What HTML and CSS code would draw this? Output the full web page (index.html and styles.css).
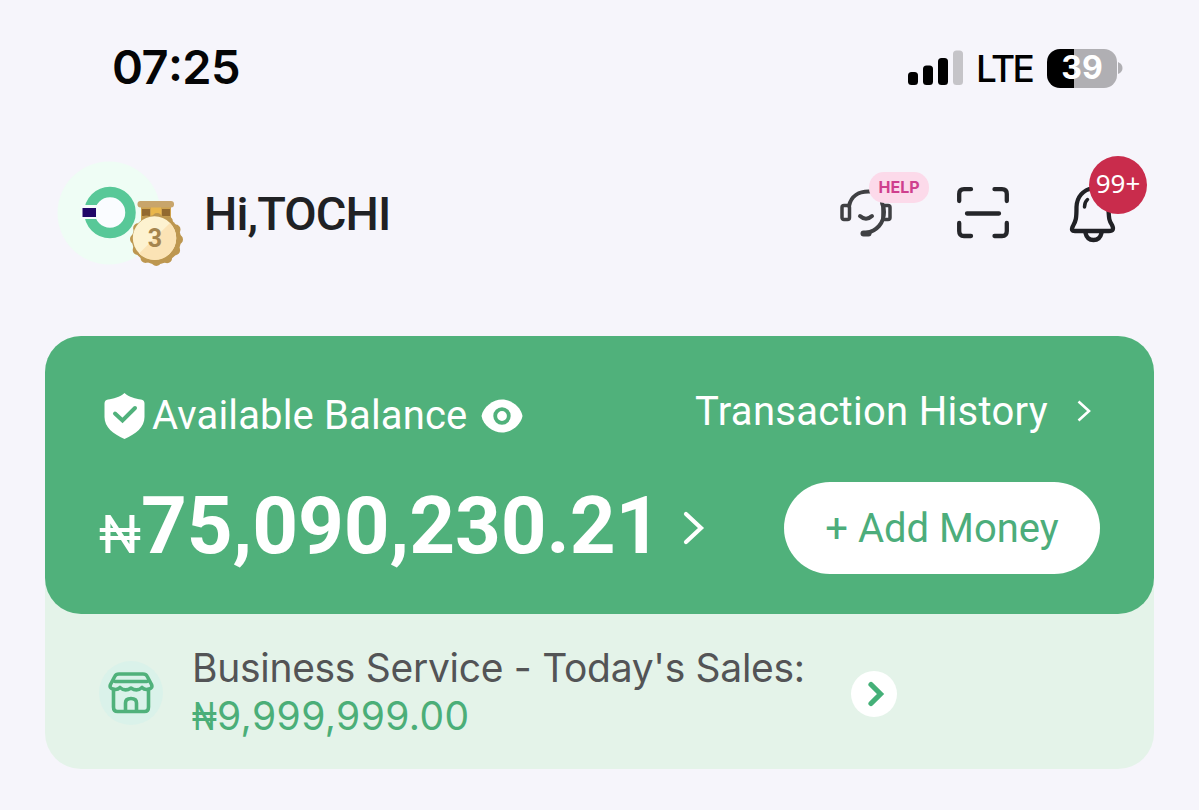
FILE: index.html
```html
<!DOCTYPE html>
<html lang="en">
<head>
    <meta charset="UTF-8">
    <meta name="viewport" content="width=device-width, initial-scale=1.0">
    <title>Wallet</title>
    <link rel="stylesheet" href="styles.css">
</head>
<body>
    <div class="status-bar">
        <span class="time">07<span class="colon">:</span>25</span>
        <svg class="signal" width="55" height="36" viewBox="0 0 55 36">
            <rect x="0" y="22" width="10" height="13" rx="3.5"/>
            <rect x="15" y="15.500" width="10" height="19.500" rx="3.500"/>
            <rect x="30" y="8" width="10" height="27" rx="3.500"/>
            <rect x="45" y="0.500" width="10" height="34.500" rx="3.500" fill="#c5c4c8"/>
        </svg>
        <span class="network">LTE</span>
        <div class="battery"><span>39</span></div>
        <svg class="battery-tip" width="5" height="14" viewBox="0 0 5 14"><path d="M0 1Q4.500 3 4.500 7T0 13Z" fill="#b0afb3"/></svg>
    </div>

    <div class="header">
        <div class="avatar">
            <svg width="128" height="108" viewBox="0 0 128 108">
                <circle cx="53" cy="54" r="51.500" fill="#effdf5"/>
                <circle cx="54" cy="53.500" r="20.500" fill="#fafcff" stroke="#58c898" stroke-width="10.500"/>
                <rect x="25" y="46" width="16" height="14" fill="#f4fbfb"/>
                <rect x="26.500" y="49" width="13.500" height="9" fill="#200668"/>
                <!-- medal -->
                <path d="M85 46h30v15H85z" fill="#cfa34f"/>
                <path d="M95 48h10v14H95z" fill="#e9b64b"/>
                <path d="M86 50h8v7h-8zM106 50h8v7h-8z" fill="#92692f"/>
                <rect x="81.500" y="42" width="36.500" height="6.500" rx="3" fill="#c8a56b"/>
                <circle cx="100.500" cy="80.500" r="24.500" fill="#bd9750"/>
                <circle cx="100.500" cy="80.500" r="21.500" fill="none" stroke="#bd9750" stroke-width="10" stroke-linecap="round" stroke-dasharray="0 11.257"/>
                <circle cx="98.500" cy="79" r="21.700" fill="#fdf2d0"/>
                <path d="M114 64A21.700 21.700 0 0 1 83 94.500Z" fill="#fbe3b5"/>
                <text x="99" y="88" class="medal-number">3</text>
            </svg>
        </div>
        <span class="greeting">Hi,TOCHI</span>
        <div class="support">
            <svg width="54" height="54" viewBox="0 0 54 54" fill="none" stroke="#3f4043" stroke-width="4" stroke-linecap="round">
                <path d="M9 20C11 10 19 5 30 5.500M42 17Q44 21 44 26C44 37 37 45 26 47"/>
                <rect x="2" y="19.500" width="7.500" height="14" rx="2" stroke-width="3.500"/>
                <rect x="43" y="19.500" width="7" height="14" rx="2" stroke-width="3.500"/>
                <path d="M20 30Q26 35.500 32 30"/>
                <path d="M23.500 47.500h5" stroke-width="6"/>
            </svg>
            <span class="help">HELP</span>
        </div>
        <svg class="scan" width="52" height="52" viewBox="0 0 52 52" fill="none" stroke="#25262a" stroke-width="4.300" stroke-linecap="round">
            <path d="M2.200 14V7Q2.200 2.200 7 2.200H14M37.500 2.200H45Q49.800 2.200 49.800 7V14M49.800 36V44Q49.800 49 45 49H37.500M14 49H7Q2.200 49 2.200 44V36M10 26.500H42"/>
        </svg>
        <div class="alerts">
            <svg width="50" height="62" viewBox="0 0 50 62" fill="none" stroke="#202125" stroke-width="4.300" stroke-linecap="round" stroke-linejoin="round">
                <path d="M24 6C14 8 8 15 7.500 25C7.500 36 7 39 4 44C2 48 3 49 6 49H40C44 49 45 47 43 43C40 39 40 36 39.500 28"/>
                <path d="M16.500 51Q18 58 24.500 58T32.500 51"/>
                <path d="M18.500 17.500Q15.500 20 15.500 25" stroke-width="3.500"/>
            </svg>
            <span class="count">99+</span>
        </div>
    </div>

    <div class="wallet">
        <div class="balance-card">
            <div class="card-top">
                <div class="balance-title">
                    <svg width="41" height="46" viewBox="0 0 41 46">
                        <path d="M20.500 0C25 4 32 6 37 6.500Q40.500 7 40.500 10.500V24C40.500 34 32 41 20.500 46C9 41 0.500 34 0.500 24V10.500Q0.500 7 4 6.500C9 6 16 4 20.500 0Z" fill="#fff"/>
                        <path d="M11 20.500L18.500 27.500L31 15" fill="none" stroke="#50b17b" stroke-width="4" stroke-linecap="round"/>
                    </svg>
                    <span class="balance-label">Available Balance</span>
                    <svg width="42" height="34" viewBox="0 0 42 34">
                        <path d="M0.500 17C2 8 12 0.500 21 0.500S40 8 41.500 17C40 26 30 33.500 21 33.500S2 26 0.500 17Z" fill="#fff"/>
                        <circle cx="21" cy="17" r="6.800" fill="none" stroke="#50b17b" stroke-width="3.800"/>
                    </svg>
                </div>
                <div class="history">
                    <span>Transaction History</span>
                    <svg width="14" height="22" viewBox="0 0 14 22" fill="none" stroke="#fff" stroke-width="2.600"><path d="M1.500 1.500L12 11L1.500 20.500"/></svg>
                </div>
            </div>
            <div class="card-bottom">
                <div class="balance-amount">
                    <span class="naira">₦</span>
                    <span class="amount">75,090,230.21</span>
                </div>
                <svg class="details" width="22" height="36" viewBox="0 0 22 36" fill="none" stroke="#fff" stroke-width="4.200" stroke-linecap="round"><path d="M3 4L18 18L3 32"/></svg>
                <button class="add-money">+ Add Money</button>
            </div>
        </div>
        <div class="business">
            <div class="shop">
                <svg width="46" height="42" viewBox="0 0 46 42" fill="none" stroke="#50b17b" stroke-width="3.600" stroke-linejoin="round" stroke-linecap="round">
                    <path d="M11 2H35Q38 2 39 4L43.500 12.500Q45 16 41 17Q37 18.500 34 15.500Q29 20 23 16Q17 20 12 15.500Q9 18.500 5 17Q1 16 2.500 12.500L7 4Q8 2 11 2ZM7 9.500H39"/>
                    <path d="M5.500 18V35Q5.500 39.500 9.500 39.500H36.500Q40.500 39.500 40.500 35V18M17.500 39V31Q17.500 26.500 23 26.500T28.500 31V39"/>
                </svg>
            </div>
            <div class="sales">
                <div class="sales-label">Business Service - Today's Sales:</div>
                <div class="sales-amount"><span class="sales-naira">₦</span>9,999,999.00</div>
            </div>
            <div class="go">
                <svg width="18" height="26" viewBox="0 0 18 26" fill="none" stroke="#45b078" stroke-width="5.200" stroke-linecap="round"><path d="M4 3.500L13.500 13L4 22.500"/></svg>
            </div>
        </div>
    </div>
</body>
</html>
```
FILE: styles.css
```css
* {
    box-sizing: border-box;
}

body {
    margin: 0;
    height: 810px;
    overflow: hidden;
    background-color: #f6f5fb;
    font-family: Roboto, sans-serif;
    white-space: nowrap;
}

svg {
    display: block;
    flex: none;
}

.status-bar {
    display: flex;
    align-items: center;
    height: 136px;
    padding: 0 76px 0 112px;
    font-family: Inter, sans-serif;
}

.time {
    padding-bottom: 2px;
    font-size: 47px;
    font-weight: 600;
    line-height: 56px;
    letter-spacing: -0.6px;
    color: #050506;
}

.colon {
    line-height: 1;
    vertical-align: 3px;
}

.signal {
    margin-left: auto;
}

.network {
    margin: 1px 14px 0 13px;
    width: 57px;
    font-size: 37px;
    font-weight: 500;
    letter-spacing: -2.5px;
}

.battery {
    width: 70px;
    height: 39px;
    border-radius: 13px;
    background: linear-gradient(to right, #000 27px, #b0afb3 27px);
    color: #fff;
    font-size: 32px;
    font-weight: 700;
    line-height: 38px;
    text-align: center;
}

.battery-tip {
    margin-left: 1px;
}

.header {
    display: flex;
    align-items: center;
    height: 200px;
    padding: 0 50px 46px 56px;
}

.avatar {
    width: 148px;
}

.medal-number {
    font: 700 25px Roboto, sans-serif;
    fill: #a5854e;
    text-anchor: middle;
}

.greeting {
    font-size: 47px;
    font-weight: 500;
    letter-spacing: -0.9px;
    color: #202124;
}

.support {
    position: relative;
    margin-left: auto;
}

.help {
    position: absolute;
    left: 29px;
    top: -14px;
    width: 60px;
    height: 31px;
    border-radius: 15px;
    background-color: #fcdaea;
    color: #cf3f8e;
    font: 700 16px/31px Inter, sans-serif;
    text-align: center;
}

.scan {
    margin: 0 60px 0 63px;
}

.alerts {
    position: relative;
    width: 80px;
}

.count {
    position: absolute;
    left: 20px;
    top: -26px;
    width: 58px;
    height: 58px;
    border-radius: 50%;
    background-color: #c92c4c;
    color: #fff;
    font: 400 26px/55px "Noto Sans", sans-serif;
    text-align: center;
}

.wallet {
    width: 1109px;
    height: 433px;
    margin-left: 45px;
    border-radius: 36px;
    background-color: #e4f3e9;
}

.balance-card {
    height: 278px;
    padding: 51px 54px 0;
    border-radius: 36px;
    background-color: #50b17b;
    color: #fff;
}

.card-top {
    display: flex;
    justify-content: space-between;
    height: 48px;
    padding: 0 9px 0 5px;
}

.balance-title {
    display: flex;
    align-items: center;
    height: 47px;
    margin-top: 5px;
}

.balance-label {
    width: 336px;
    padding-left: 7px;
    font-size: 40px;
    letter-spacing: 0.15px;
}

.history {
    display: flex;
    align-items: center;
    gap: 29px;
    height: 48px;
    font-size: 40px;
    letter-spacing: 0.3px;
}

.card-bottom {
    display: flex;
    align-items: center;
    height: 92px;
    margin-top: 47px;
}

.balance-amount {
    display: flex;
    align-items: baseline;
    width: 584px;
    height: 98px;
}

.naira {
    width: 42px;
    font-size: 53px;
}

.amount {
    font-size: 80px;
    font-weight: 700;
    line-height: 94px;
    letter-spacing: -0.1px;
}

.add-money {
    width: 316px;
    height: 92px;
    margin-left: auto;
    padding: 0;
    border: none;
    border-radius: 46px;
    background-color: #fff;
    color: #4cad7b;
    font: 400 40px Roboto, sans-serif;
}

.business {
    display: flex;
    height: 155px;
    padding: 30px 54px 0;
}

.shop {
    display: flex;
    align-items: center;
    justify-content: center;
    width: 64px;
    height: 64px;
    margin-top: 17px;
    border-radius: 50%;
    background-color: #daf2ea;
}

.sales {
    width: 658px;
    margin-left: 29px;
    color: #535456;
    font: 400 39px/48px Inter, sans-serif;
}

.sales-label {
    letter-spacing: -0.3px;
}

.sales-amount {
    height: 48px;
    color: #4bae78;
    letter-spacing: 0.4px;
}

.sales-naira {
    display: inline-block;
    width: 25px;
    font-family: Roboto, sans-serif;
    transform: scaleX(0.8);
    transform-origin: left;
}

.go {
    display: flex;
    align-items: center;
    justify-content: center;
    width: 46px;
    height: 46px;
    margin: 27px 0 0 1px;
    padding-left: 4px;
    border-radius: 50%;
    background-color: #fff;
}
```
